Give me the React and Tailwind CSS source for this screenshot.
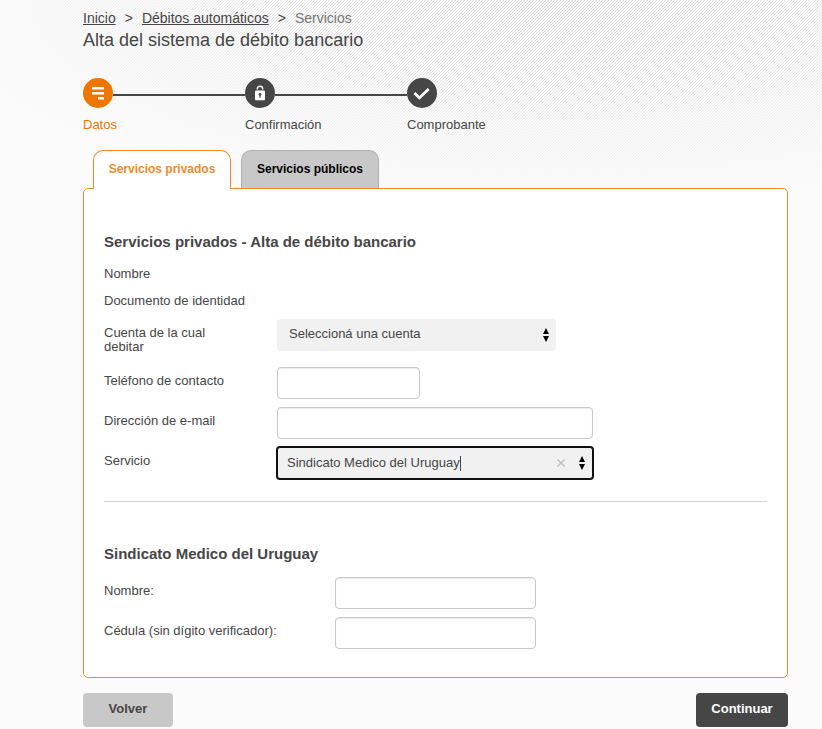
import { useState } from 'react'

const steps = [
  { id: 'datos', label: 'Datos', Icon: FormIcon, active: true },
  { id: 'confirmacion', label: 'Confirmación', Icon: LockIcon, active: false },
  { id: 'comprobante', label: 'Comprobante', Icon: CheckIcon, active: false },
]

function FormIcon() {
  return (
    <svg width="30" height="30" viewBox="0 0 30 30" aria-hidden="true">
      <g fill="#fff">
        <rect x="9" y="9" width="12" height="2.5" />
        <rect x="9" y="14" width="12" height="2.5" />
        <rect x="15" y="19" width="6" height="2.5" />
      </g>
    </svg>
  )
}

function LockIcon() {
  return (
    <svg width="30" height="30" viewBox="0 0 30 30" aria-hidden="true">
      <path
        d="M12.3 11.6v-.6a2.7 2.7 0 0 1 5.4 0v.6"
        fill="none"
        stroke="#fff"
        strokeWidth="1.4"
      />
      <rect x="10" y="12.6" width="10" height="9.6" rx="1" fill="#fff" />
      <circle cx="15" cy="16.4" r="1.3" fill="#464646" />
      <rect x="14.4" y="16.4" width="1.2" height="3.4" fill="#464646" />
    </svg>
  )
}

function CheckIcon() {
  return (
    <svg width="30" height="30" viewBox="0 0 30 30" aria-hidden="true">
      <path
        d="M7.5 15l4.9 4.9L21.7 11"
        fill="none"
        stroke="#fff"
        strokeWidth="2.8"
      />
    </svg>
  )
}

function Arrows() {
  return (
    <svg
      width="6"
      height="14"
      viewBox="0 0 6 14"
      className="pointer-events-none"
      aria-hidden="true"
    >
      <path d="M3 0l3 6H0zM3 14l3-6H0z" fill="#000" />
    </svg>
  )
}

function Stepper() {
  return (
    <ol className="mt-[26px] flex">
      {steps.map(({ id, label, Icon, active }, i) => (
        <li key={id} className="w-[162px]">
          <div className="flex items-center">
            <span
              className={
                active
                  ? 'size-[30px] shrink-0 rounded-full bg-[#ee7500]'
                  : 'size-[30px] shrink-0 rounded-full bg-[#464646]'
              }
            >
              <Icon />
            </span>
            {i < steps.length - 1 && (
              <span className="mt-1 h-0.5 flex-1 bg-[#464646]" />
            )}
          </div>
          <p
            className={
              active ? 'mt-2.5 text-[#ee7500]' : 'mt-2.5 text-[#464646]'
            }
          >
            {label}
          </p>
        </li>
      ))}
    </ol>
  )
}

function ReadOnlyRow({ label }) {
  return <p className="h-[27px] pt-[7px]">{label}</p>
}

function Row({ id, label, children }) {
  return (
    <div className="flex items-start">
      <label htmlFor={id} className="mr-[31px] w-[142px] shrink-0 pt-[7px]">
        {label}
      </label>
      {children}
    </div>
  )
}

function TextInput({ id, type = 'text', className }) {
  return (
    <input
      id={id}
      type={type}
      className={`h-8 rounded border border-[#c8c8c8] bg-white px-2.5 shadow-[inset_0_1px_1px_rgba(0,0,0,0.08)] ${className}`}
    />
  )
}

function App() {
  const [tab, setTab] = useState('privados')
  const [service, setService] = useState('Sindicato Medico del Uruguay')

  const activeTab =
    'relative -mb-px h-[39px] w-[138px] rounded-t-[10px] border border-b-0 border-[#f08a2b] bg-white pb-0.5 text-xs/[14px] font-bold text-[#f08a2b]'
  const idleTab =
    'h-[38px] w-[138px] rounded-t-[10px] border border-b-0 border-[#b0b0b0] bg-[#c8c8c8] pb-0.5 text-xs/[14px] font-bold text-black'

  return (
    <div className="relative isolate min-h-screen bg-[#fbfbfb] pr-[34px] pb-0.5 pl-[83px] font-['Liberation_Sans',Arial,sans-serif] text-[13px]/[14px] text-[#464646]">
      {/* hatched backdrop that fades out from the top */}
      <div className="absolute inset-x-0 top-0 -z-10 h-[210px] bg-[linear-gradient(135deg,transparent_42%,#d4d4d4_42%,#d4d4d4_58%,transparent_58%)] [background-size:3px_3px] [mask-image:radial-gradient(ellipse_640px_210px_at_68%_0px,#000,transparent)]" />

      <nav aria-label="Ruta" className="pt-2 text-sm/5">
        <ol className="flex">
          <li>
            <a href="#inicio" className="underline">Inicio</a>
            <span className="mx-[9px]">&gt;</span>
          </li>
          <li>
            <a href="#debitos" className="underline">Débitos automáticos</a>
            <span className="mx-[9px]">&gt;</span>
          </li>
          <li className="text-[#777]">Servicios</li>
        </ol>
      </nav>
      <h1 className="text-lg/6">Alta del sistema de débito bancario</h1>

      <Stepper />

      <div role="tablist" className="mt-[18px] flex items-end gap-2.5 pl-2.5">
        <button
          role="tab"
          aria-selected={tab === 'privados'}
          onClick={() => setTab('privados')}
          className={tab === 'privados' ? activeTab : idleTab}
        >
          Servicios privados
        </button>
        <button
          role="tab"
          aria-selected={tab === 'publicos'}
          onClick={() => setTab('publicos')}
          className={tab === 'publicos' ? activeTab : idleTab}
        >
          Servicios públicos
        </button>
      </div>

      <form onSubmit={(e) => e.preventDefault()}>
        <div className="rounded-[5px] border border-[#f08a2b] bg-white px-5 pt-[43px] pb-7">
          <h2 className="text-[15px]/5 font-bold">
            Servicios privados - Alta de débito bancario
          </h2>

          <div className="mt-2">
            <ReadOnlyRow label="Nombre" />
            <ReadOnlyRow label="Documento de identidad" />
          </div>

          <div className="mt-[5px]">
            <Row id="cuenta" label="Cuenta de la cual debitar">
              <div className="grid w-[279px] items-center">
                <select
                  id="cuenta"
                  className="col-start-1 row-start-1 h-8 w-full appearance-none rounded bg-[#f1f1f1] pb-0.5 pl-3"
                >
                  <option>Seleccioná una cuenta</option>
                </select>
                <span className="pointer-events-none col-start-1 row-start-1 mr-[7px] justify-self-end">
                  <Arrows />
                </span>
              </div>
            </Row>
          </div>

          <div className="mt-[13px] space-y-2">
            <Row id="telefono" label="Teléfono de contacto">
              <TextInput id="telefono" type="tel" className="w-[143px]" />
            </Row>
            <Row id="email" label="Dirección de e-mail">
              <TextInput id="email" type="email" className="w-[316px]" />
            </Row>
            <Row id="servicio" label="Servicio">
              <div className="flex h-8 w-[316px] items-center rounded-[3px] border border-[#101010] bg-[#f1f1f1] pr-[7px] pl-[9px] ring-1 ring-[#101010]">
                <input
                  id="servicio"
                  type="text"
                  role="combobox"
                  aria-expanded="false"
                  value={service}
                  onChange={(e) => setService(e.target.value)}
                  className="h-full field-sizing-content max-w-[250px] bg-transparent pb-0.5 caret-transparent outline-none"
                />
                <span className="h-[15px] w-px bg-[#464646]" />
                <button
                  type="button"
                  aria-label="Borrar"
                  onClick={() => setService('')}
                  className="mr-[14px] ml-auto"
                >
                  <svg width="8" height="8" viewBox="0 0 8 8" aria-hidden="true">
                    <path d="M.5.5l7 7M7.5.5l-7 7" stroke="#bdbdbd" strokeWidth="1.2" />
                  </svg>
                </button>
                <Arrows />
              </div>
            </Row>
          </div>

          <hr className="mt-[22px] border-[#d2d2d2]" />

          <h2 className="mt-[42px] text-[15px]/5 font-bold">
            Sindicato Medico del Uruguay
          </h2>

          <div className="mt-[13px] space-y-2">
            <div className="flex items-start">
              <label htmlFor="nombre" className="w-[231px] shrink-0 pt-[7px]">
                Nombre:
              </label>
              <TextInput id="nombre" className="w-[201px]" />
            </div>
            <div className="flex items-start">
              <label htmlFor="cedula" className="w-[231px] shrink-0 pt-[7px]">
                Cédula (sin dígito verificador):
              </label>
              <TextInput id="cedula" className="w-[201px]" />
            </div>
          </div>
        </div>

        <div className="mt-[15px] flex justify-between font-bold">
          <button
            type="button"
            className="h-[34px] w-[90px] rounded bg-[#c8c8c8] pb-0.5"
          >
            Volver
          </button>
          <button
            type="submit"
            className="h-[34px] w-[92px] rounded bg-[#464646] pb-0.5 text-white"
          >
            Continuar
          </button>
        </div>
      </form>
    </div>
  )
}

export default App
